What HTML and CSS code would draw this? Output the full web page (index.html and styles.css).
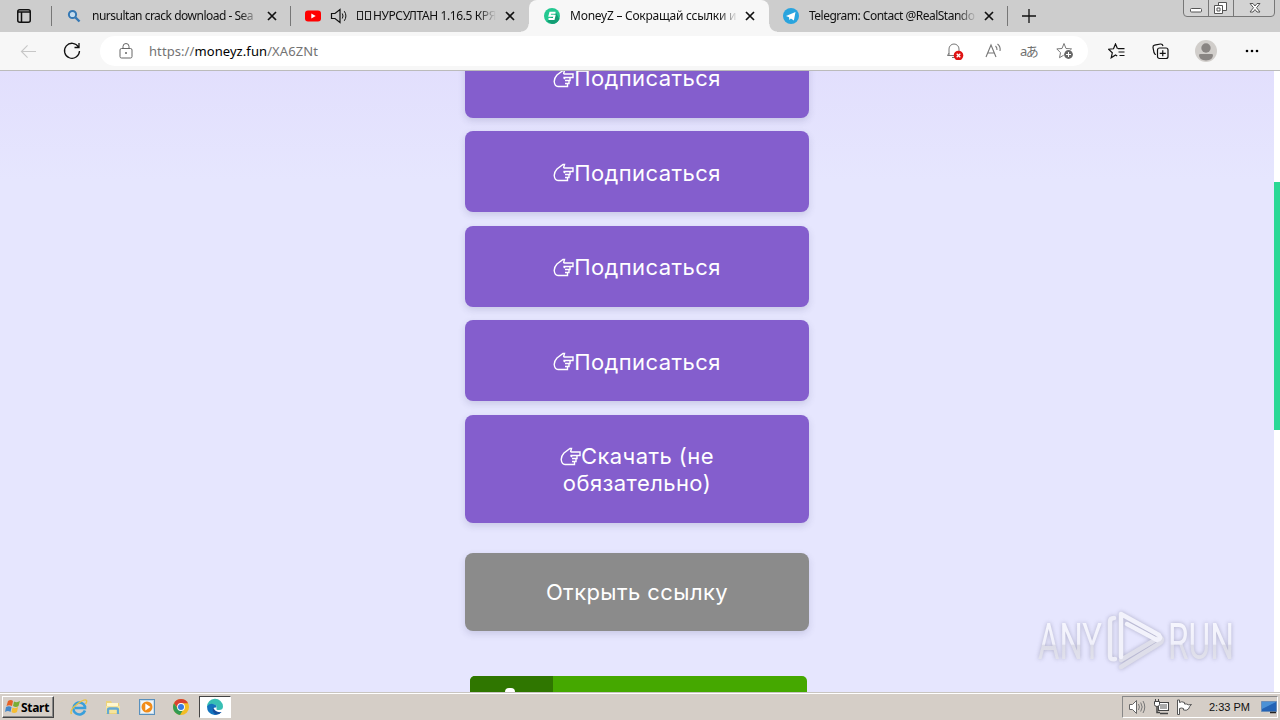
FILE: index.html
```html
<!DOCTYPE html>
<html lang="ru">
<head>
  <meta charset="UTF-8">
  <meta name="viewport" content="width=device-width, initial-scale=1.0">
  <title>MoneyZ – Сокращай ссылки</title>
  <link rel="stylesheet" href="styles.css">
</head>
<body>

  <!-- shared shapes -->
  <svg class="defs" width="0" height="0">
    <symbol id="close" viewBox="0 0 10 10"><path d="M1 1l8 8M9 1L1 9" stroke="#111" stroke-width="1.7"/></symbol>
    <symbol id="hand" viewBox="0 0 21 20"><path d="M10.500 5L11.500 1.500H10L4 6Q1.200 9 1.200 12.500Q1.800 17.500 5 17.500H14.500V14.500M10.500 5H20V8.500H10.500M17 8.500V11.500H12M16 11.500V14.500H12M10.500 8.500L12 10" fill="none" stroke="#fff" stroke-width="1.400"/></symbol>
  </svg>

  <div class="tabs">
    <div class="tab-menu">
      <svg width="14" height="14" viewBox="0 0 14 14"><rect x=".75" y=".75" width="12.5" height="12.5" rx="2" fill="none" stroke="#111" stroke-width="1.5"/><path d="M1 3h12M4.5 3v10" stroke="#111" stroke-width="1.500"/></svg>
    </div>
    <div class="tab tab-search">
      <svg class="favicon" viewBox="0 0 16 16"><circle cx="6.5" cy="6.5" r="3.6" fill="#c4dcef" stroke="#3478b4" stroke-width="2"/><path d="M9.5 9.5l4 4" stroke="#3478b4" stroke-width="2.4"/></svg>
      <span class="title">nursultan crack download - Sea</span>
      <svg class="close"><use href="#close"/></svg>
    </div>
    <div class="tab tab-video">
      <svg class="favicon" viewBox="0 0 16 16"><rect y="2.5" width="16" height="11" rx="3" fill="#f00"/><path d="M6.3 5.5v5l4.4-2.5z" fill="#fff"/></svg>
      <svg class="sound" viewBox="0 0 18 16"><path d="M1.5 5.5h3.5l5-4v13l-5-4H1.5z" fill="none" stroke="#111" stroke-width="1.2"/><path d="M12.3 5.5q1.4 2.5 0 5M14.3 3.2q3.2 4.8 0 9.6" fill="none" stroke="#111"/></svg>
      <span class="title"><i class="tofu"></i><i class="tofu"></i>НУРСУЛТАН 1.16.5 КРЯ</span>
      <svg class="close"><use href="#close"/></svg>
    </div>
    <div class="tab tab-active">
      <svg class="favicon" viewBox="0 0 16 16"><circle cx="8" cy="8" r="8" fill="#24c891"/><path d="M3 13.5L12 5l3.5 6Q13 16 8 16z" fill="#139d74"/><path d="M11.500 4.800H6.300L5.500 7.800h5L9.700 11H4.500" fill="none" stroke="#fff" stroke-width="2"/></svg>
      <span class="title">MoneyZ – Сокращай ссылки и</span>
      <svg class="close"><use href="#close"/></svg>
    </div>
    <div class="tab tab-telegram">
      <svg class="favicon" viewBox="0 0 16 16"><circle cx="8" cy="8" r="8" fill="#29a4de"/><path d="M3 8l9.5-4-1.6 8.4-3-2-1.5 1.5-.4-2.6z" fill="#fff"/></svg>
      <span class="title">Telegram: Contact @RealStando</span>
      <svg class="close"><use href="#close"/></svg>
    </div>
    <svg class="new-tab" viewBox="0 0 14 14"><path d="M7 0v14M0 7h14" stroke="#111" stroke-width="1.3"/></svg>
    <svg class="window-buttons" viewBox="0 0 94 18">
      <path d="M.5 0v13q0 3.5 3.5 3.5h84q3.5 0 3.5-3.5V0M25.5 0v16M50.500 0v16" fill="#d3d3d3" stroke="#777"/>
      <rect x="7.500" y="8.500" width="11" height="3.500" rx="1" fill="#fff" stroke="#555"/>
      <path d="M35.500 2.500h8v8h-8z" fill="#fff" stroke="#555"/><path d="M31.500 5.500h8v8h-8zM34 8h3v3h-3z" fill="#fff" stroke="#555"/>
      <path d="M67 3.500h3l2 2.500 2-2.500h3l-3.500 4.200 3.500 4.300h-3l-2-2.500-2 2.500h-3l3.500-4.300z" fill="#fff" stroke="#555"/>
    </svg>
  </div>

  <div class="toolbar">
    <svg class="back" viewBox="0 0 18 16"><path d="M17 8H2M8 1.500L1.500 8 8 14.500" fill="none" stroke="#c7c7c7" stroke-width="1.200"/></svg>
    <svg class="reload" viewBox="0 0 18 18"><path d="M15.500 5A7.500 7.500 0 1 0 16.500 9M16 1v4.500h-4.500" fill="none" stroke="#111" stroke-width="1.300"/></svg>
    <div class="address">
      <svg class="lock" viewBox="0 0 14 16"><rect x="1" y="5.500" width="12" height="9.500" rx="1.500" fill="none" stroke="#666"/><path d="M4 5.500V3.500a3 3 0 0 1 6 0v2" fill="none" stroke="#666"/><circle cx="7" cy="10" r="1" fill="#666"/></svg>
      <span class="url">https://<b>moneyz.fun</b>/XA6ZNt</span>
      <div class="address-icons">
        <svg class="bell" viewBox="0 0 18 18"><path d="M1.500 13.500h8M3 13V7a5 5 0 0 1 10 0v3M1.500 13.500L3 11M6 15.500h3" fill="none" stroke="#777"/><circle cx="12.500" cy="13.500" r="4.800" fill="#df1414"/><path d="M10.700 11.700l3.600 3.600M14.300 11.700l-3.600 3.600" stroke="#fff" stroke-width="1.300"/></svg>
        <svg width="17" height="16" viewBox="0 0 17 16"><path d="M1 14L6 2l5 12M2.800 10h6.400M10.500 3q1.700 1.500 1.500 4M12.500 1q3.300 2.500 2.500 7" fill="none" stroke="#777" stroke-width="1.100"/></svg>
        <span class="translate">aあ</span>
        <svg width="18" height="18" viewBox="0 0 18 18"><path d="M8 1.500l2 5 5.500.4-4 3.800 1 5L8 13l-4.500 2.700 1-5L.8 6.900 6 6.500z" fill="none" stroke="#777"/><circle cx="12.500" cy="12.500" r="5" fill="#fff"/><circle cx="12.500" cy="12.500" r="4.400" fill="#686868"/><path d="M12.500 10v5M10 12.500h5" stroke="#fff"/></svg>
      </div>
    </div>
    <svg class="favorites" viewBox="0 0 18 16"><path d="M9.500 5.800L7.500 1l-2 4.800-5 .4 3.800 3.600-1.100 5L7.500 12l1.700 1.100M10 5.700h6.500M10.500 9h6M11.500 12.500h5" fill="none" stroke="#111" stroke-width="1.200"/></svg>
    <svg class="collections" viewBox="0 0 17 17"><path d="M4 11.500Q2.500 11.500 2 9.500L1 4.500Q.8 2.500 2.500 2.200L8.500 1q2-.2 2.500 2" fill="none" stroke="#111" stroke-width="1.200"/><rect x="5.500" y="5" width="10.500" height="10.500" rx="2" fill="#f7f7f7" stroke="#111" stroke-width="1.200"/><path d="M10.750 7.300v6M7.750 10.300h6" stroke="#111" stroke-width="1.200"/></svg>
    <svg class="profile" viewBox="0 0 22 22"><circle cx="11" cy="11" r="11" fill="#d1cecb"/><circle cx="11" cy="8" r="4.700" fill="#898583"/><path d="M4 15q0-1 1.500-1h11q1.500 0 1.500 1 0 5-7 5.500-7-.5-7-5.500z" fill="#898583"/></svg>
    <svg class="more" viewBox="0 0 14 4"><circle cx="2" cy="2" r="1.300"/><circle cx="7" cy="2" r="1.300"/><circle cx="12" cy="2" r="1.300"/></svg>
  </div>

  <div class="page">
    <div class="content">
      <div class="tasks">
        <div class="btn"><svg class="hand"><use href="#hand"/></svg>Подписаться</div>
        <div class="btn"><svg class="hand"><use href="#hand"/></svg>Подписаться</div>
        <div class="btn"><svg class="hand"><use href="#hand"/></svg>Подписаться</div>
        <div class="btn"><svg class="hand"><use href="#hand"/></svg>Подписаться</div>
        <div class="btn btn-download"><span><svg class="hand"><use href="#hand"/></svg>Скачать (не</span><span>обязательно)</span></div>
      </div>
      <div class="btn btn-open">Открыть ссылку</div>
      <div class="banner"><div class="banner-icon"><i></i></div></div>
    </div>
    <div class="scrollbar"><div class="thumb"></div></div>

    <!-- watermark -->
    <svg class="watermark" viewBox="0 0 200 70">
      <defs>
        <linearGradient id="fade" x1="0" y1="0" x2="0" y2="1">
          <stop offset="0" stop-color="#f8f8ff"/>
          <stop offset=".54" stop-color="#f0f0fa"/>
          <stop offset=".55" stop-color="#dcdce8"/>
          <stop offset="1" stop-color="#e6e6f0"/>
        </linearGradient>
      </defs>
      <g class="mark-text">
        <text x="2" y="54" textLength="64" lengthAdjust="spacingAndGlyphs">ANY</text>
        <text x="132" y="54" textLength="66" lengthAdjust="spacingAndGlyphs">RUN</text>
      </g>
      <g fill="none" stroke-linecap="round" stroke-linejoin="round" stroke-width="4.500">
        <path d="M78 13q-4 0-4 4v34q0 4 5 3" stroke="#eeeef8"/>
        <path d="M85 62l39-24q4-3 0-6L85 55" stroke="#dedeea"/>
        <path d="M85 52V9l38 21q3 4-2 5L91 19" stroke="#f2f2fb"/>
      </g>
    </svg>
  </div>

  <div class="taskbar">
    <div class="start">
      <svg width="16" height="16" viewBox="0 0 16 16"><path d="M3 2q3-2 5 0L7 7Q4 5.500 1.500 7z" fill="#e66125"/><path d="M9 2.500q3 1.500 6-.5L13.500 7Q11 9 8 7z" fill="#79ad35"/><path d="M1 8q3-1.500 5.500 0L5.500 13Q3 11 0 13z" fill="#4387c9"/><path d="M7.500 8.500q3 1.500 5.500-.5L12 13q-3 2-5.500 0z" fill="#f5bd31"/></svg>
      <b>Start</b>
    </div>
    <div class="launch">
      <svg viewBox="0 0 18 18"><path d="M15 12.500A6 6 0 1 1 15 8.500V10H5" fill="none" stroke="#399fdb" stroke-width="2.600"/><path d="M1.500 16Q-1 12 8 5.500 15 .5 16.500 2.500 17.200 3.500 15.500 6" fill="none" stroke="#e8c246" stroke-width="1.400"/></svg>
      <svg viewBox="0 0 18 18"><path d="M2 3h5l1 2h7v11H2z" fill="#ecd37a"/><path d="M3 5h11v3H3z" fill="#fff7cf"/><path d="M2 8h14v7H2z" fill="#f5e49c"/><path d="M4 16v-4q0-1.500 1.500-1.500h7q1.500 0 1.500 1.500v4" fill="none" stroke="#64a9d4" stroke-width="2.300"/></svg>
      <svg viewBox="0 0 18 18"><rect x="1.500" y="1.500" width="15" height="15" fill="#c8dcea" stroke="#5990bd"/><rect x="3" y="3" width="12" height="12" fill="#eef5fa"/><circle cx="9" cy="9" r="5.500" fill="#f18c19"/><path d="M7.300 5.500v7L12.500 9z" fill="#fff"/></svg>
      <svg viewBox="0 0 18 18"><circle cx="9" cy="9" r="8" fill="#f3bd25"/><path d="M2 5.200A8 8 0 0 1 16 5.200H9L6 10.500z" fill="#d84132"/><path d="M2 5.200A8 8 0 0 0 8 17l3.500-6H6z" fill="#329b53"/><circle cx="9" cy="9" r="3.900" fill="#fff"/><circle cx="9" cy="9" r="3" fill="#377be3"/></svg>
      <div class="running"><svg viewBox="0 0 18 18"><path d="M1 9A8 8 0 0 1 17 8.500Q17 12 13 12q-3 0-2.500-1.500Q11.500 7 8 6.500 3.500 6 1 9z" fill="#38bfb4"/><path d="M1 8.500Q3 5 7 6q4 .8 3.500 3.500Q6 9 7 12q1.500 4 8.500 2Q12.500 17.500 8.500 17 1 16 1 8.500z" fill="#1373be"/><path d="M7 9q-2 5 3 7.500 3.500 0 5.500-2.500Q9 15 7 9z" fill="#144d9c"/></svg></div>
    </div>
    <div class="tray">
      <svg width="18" height="16" viewBox="0 0 18 16"><path d="M1.500 5.500h3l4-4v13l-4-4h-3z" fill="#fff" stroke="#666"/><path d="M10.500 5q1.800 3 0 6M12.700 3.500q3 4.500 0 9M15 2q3.500 6 0 12" fill="none" stroke="#777"/></svg>
      <svg width="17" height="16" viewBox="0 0 17 16"><rect x="5.500" y="3.500" width="10" height="8" fill="#aaa" stroke="#444"/><path d="M6.500 4.500h8v6h-8z" fill="none" stroke="#fff"/><path d="M7 14.500h8M4 7v6.500h3" fill="none" stroke="#444" stroke-width="1.500"/><path d="M1.500 2.500h5v3q0 2-2.500 2t-2.500-2zM2.500 0v2M5.500 0v2" fill="#fff" stroke="#444"/></svg>
      <svg class="flag" viewBox="0 0 17 16"><path d="M1.500 1v14.500h2V9.500q2-1 4 0V11q3 1 5-1 1-3 3-4.500-3 1-5-.5h-2V3.500q-3-1.500-5 0V1z" fill="#fff" stroke="#555"/></svg>
      <span class="clock">2:33 PM</span>
      <svg width="16" height="14" viewBox="0 0 16 14"><path d="M.5 1.500h15v10H.5z" fill="#2463b5" stroke="#6c8eb8"/><path d="M1 2h14L1 9z" fill="#4b91d6"/><path d="M9 12.500h6" stroke="#222" stroke-width="1.500"/></svg>
    </div>
  </div>

</body>
</html>
```
FILE: styles.css
```css
* {
  box-sizing: border-box;
}
body {
  margin: 0;
  width: 1280px;
  height: 720px;
  overflow: hidden;
  display: flex;
  flex-direction: column;
  font-family: "Noto Sans", sans-serif;
  font-size: 12px;
  color: #111;
}
svg {
  flex: none;
  display: block;
}
.defs {
  position: absolute;
}

/* tabs */
.tabs {
  height: 32px;
  flex: none;
  display: flex;
  background: #cdcdcd;
}
.tab-menu {
  width: 52px;
  padding: 9px 0 0 17px;
  position: relative;
}
.tab {
  height: 32px;
  display: flex;
  align-items: center;
  position: relative;
}
.tab-menu::after,
.tab-search::after,
.tab-telegram::after {
  content: "";
  position: absolute;
  right: 0;
  top: 6px;
  width: 1px;
  height: 20px;
  background: #777;
}
.tab-search {
  width: 239px;
  padding-left: 14px;
}
.tab-video {
  width: 238px;
  padding-left: 14px;
}
.tab-active {
  width: 240px;
  padding-left: 15px;
  background: #f7f7f7;
  border-radius: 8px 8px 0 0;
}
/* curved feet of the active tab */
.tab-active::before,
.tab-active::after {
  content: "";
  position: absolute;
  bottom: 0;
  width: 8px;
  height: 8px;
}
.tab-active::before {
  left: -8px;
  background: radial-gradient(circle at 0 0, #cdcdcd 7px, #f7f7f7 8px);
}
.tab-active::after {
  right: -8px;
  background: radial-gradient(circle at 100% 0, #cdcdcd 7px, #f7f7f7 8px);
}
.tab-telegram {
  width: 239px;
  padding-left: 14px;
}
.favicon {
  width: 16px;
  height: 16px;
}
.sound {
  width: 18px;
  height: 16px;
  margin-left: 9px;
}
.title {
  width: 166px;
  margin-left: 10px;
  white-space: nowrap;
  line-height: 20px;
  letter-spacing: -.5px;
  -webkit-mask-image: linear-gradient(to right, #000 148px, transparent 168px);
}
.tab-video .title {
  width: 139px;
  margin-left: 9px;
  letter-spacing: -.4px;
  -webkit-mask-image: linear-gradient(to right, #000 121px, transparent 139px);
}
.tab-active .title {
  letter-spacing: -.25px;
}
.tofu {
  display: inline-block;
  width: 6px;
  height: 9px;
  margin-right: 2px;
  border: 1px solid #222;
}
.close {
  width: 10px;
  height: 10px;
  margin-left: 9px;
}
.new-tab {
  width: 14px;
  height: 14px;
  margin: 9px 0 0 14px;
}
.window-buttons {
  width: 94px;
  height: 18px;
  margin-left: auto;
  margin-right: 3px;
}

/* toolbar */
.toolbar {
  height: 39px;
  flex: none;
  display: flex;
  align-items: center;
  padding-left: 20px;
  background: #f7f7f7;
  border-bottom: 1px solid #bbb;
}
.back {
  width: 17px;
  height: 15px;
}
.reload {
  width: 18px;
  height: 18px;
  margin-left: 26px;
}
.address {
  width: 988px;
  height: 30px;
  margin-left: 19px;
  padding: 0 14px 0 19px;
  display: flex;
  align-items: center;
  background: #fff;
  border-radius: 15px;
}
.lock {
  width: 14px;
  height: 16px;
}
.url {
  margin-left: 16px;
  font-size: 13px;
  letter-spacing: .08px;
  color: #737373;
}
.url b {
  font-weight: normal;
  color: #000;
}
.address-icons {
  margin-left: auto;
  display: flex;
  align-items: center;
  gap: 18px;
}
.bell {
  width: 18px;
  height: 18px;
  margin-right: 3px;
}
.translate {
  width: 18px;
  font: 13px/18px "Noto Sans", "Noto Sans CJK JP", sans-serif;
  letter-spacing: -1.5px;
  white-space: nowrap;
  color: #707070;
}
.favorites {
  width: 18px;
  height: 16px;
  margin-left: 20px;
}
.collections {
  width: 17px;
  height: 17px;
  margin-left: 26px;
}
.profile {
  width: 22px;
  height: 22px;
  margin-left: 26px;
}
.more {
  width: 14px;
  height: 4px;
  margin-left: 28px;
}

/* page */
.page {
  height: 621px;
  flex: none;
  overflow: hidden;
  display: flex;
  position: relative;
  background: linear-gradient(#e2dffd, #e6e6fe 110px);
}
.content {
  width: 1274px;
  flex: none;
  display: flex;
  flex-direction: column;
  align-items: center;
}
.tasks {
  margin-top: -34.500px;
  display: flex;
  flex-direction: column;
  gap: 13.500px;
}
.btn {
  width: 344px;
  height: 81px;
  flex: none;
  display: flex;
  align-items: center;
  justify-content: center;
  padding-top: 3px;
  background: #845ecd;
  border-radius: 8px;
  box-shadow: 0 3px 7px rgba(60, 60, 110, .17);
  color: #fff;
  font-family: Inter, sans-serif;
  font-size: 22px;
  letter-spacing: .42px;
  line-height: 27px;
}
.hand {
  width: 21px;
  height: 20px;
}
.btn-download {
  height: 108px;
  flex-direction: column;
}
.btn-download span {
  display: flex;
  align-items: center;
}
.btn-open {
  height: 78px;
  margin-top: 30px;
  padding-top: 1px;
  background: #8b8b8b;
}
.banner {
  width: 337px;
  height: 60px;
  flex: none;
  margin: 45px 0 0 2px;
  overflow: hidden;
  background: #45a800;
  border-radius: 5px;
}
.banner-icon {
  width: 83px;
  height: 60px;
  padding: 12px 0 0 35px;
  background: #2f7600;
}
.banner-icon i {
  display: block;
  width: 10px;
  height: 12px;
  background: #fff;
  border-radius: 4px;
}
.scrollbar {
  width: 6px;
  padding-top: 111px;
  background: #fff;
}
.thumb {
  height: 248px;
  background: #2bd895;
}
.watermark {
  position: absolute;
  left: 1036px;
  top: 534px;
  width: 200px;
  height: 70px;
  filter: drop-shadow(0 0 2px rgba(90, 90, 120, .4));
}
.mark-text {
  font: 50px Roboto, sans-serif;
  fill: url(#fade);
}

/* taskbar */
.taskbar {
  height: 28px;
  flex: none;
  display: flex;
  align-items: center;
  padding: 2px 2px 1px;
  background: #d5cec7;
  border-top: 1px solid #c9c5c1;
  box-shadow: inset 0 1px #fff;
}
.start {
  width: 52px;
  height: 22px;
  display: flex;
  align-items: center;
  padding-left: 2px;
  border: 1px solid;
  border-color: #fff #444 #444 #fff;
  box-shadow: inset -1px -1px #888;
}
.start b {
  letter-spacing: -.3px;
  color: #000;
}
.launch {
  display: flex;
  align-items: center;
  margin-left: 16px;
  gap: 16px;
}
.launch svg {
  width: 18px;
  height: 18px;
}
.running {
  width: 32px;
  height: 22px;
  margin-left: -7px;
  padding: 1px 0 0 6px;
  background: #fff;
  border: 1px solid;
  border-color: #444 #fff #fff #444;
}
.tray {
  width: 156px;
  height: 22px;
  margin-left: auto;
  padding-left: 5px;
  display: flex;
  align-items: center;
  gap: 7px;
  border: 1px solid;
  border-color: #888 #fff #fff #888;
}
.flag {
  width: 17px;
  height: 16px;
  margin-left: -1px;
}
.clock {
  width: 42px;
  margin: 0 3px 0 9px;
  font: 11px "Liberation Sans", sans-serif;
  white-space: nowrap;
}
```
